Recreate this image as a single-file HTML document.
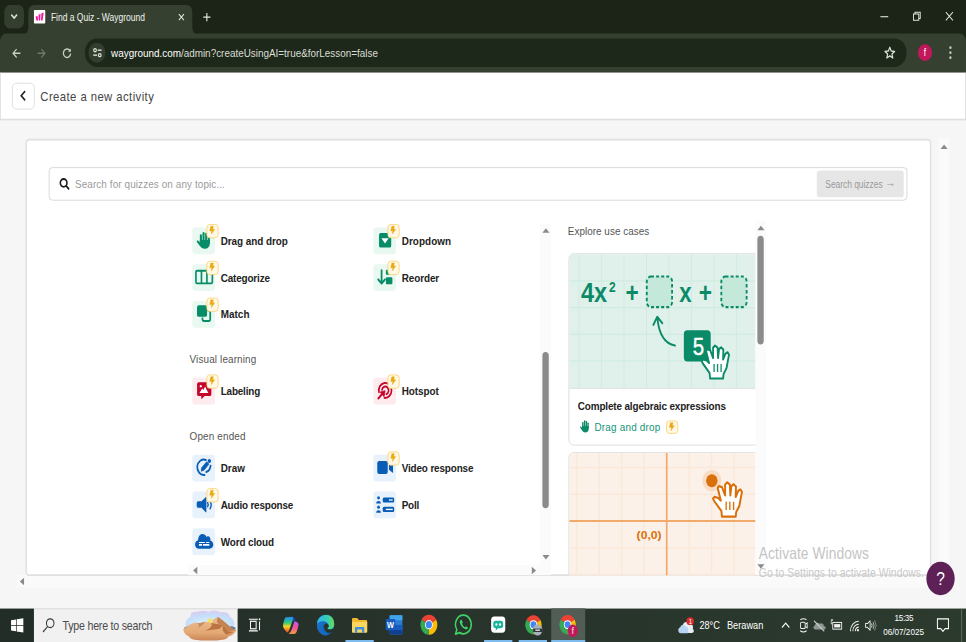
<!DOCTYPE html>
<html lang="en">
<head>
<meta charset="utf-8">
<title>Find a Quiz - Wayground</title>
<style>
*{box-sizing:border-box;margin:0;padding:0}
html,body{width:966px;height:642px;overflow:hidden;background:#f6f6f6}
body{font-family:"Liberation Sans",sans-serif;color:#222}
#stage{position:absolute;left:0;top:0;width:1366px;height:768px;transform:scale(0.70717,0.83594);transform-origin:0 0;overflow:hidden;background:#f6f6f6}
.abs{position:absolute}
.t{position:absolute;white-space:nowrap;line-height:20px}
svg{position:absolute;overflow:visible}
/* chrome */
#tabstrip{left:0;top:0;width:1366px;height:60px;background:#1b2416}
#toolbar{left:0;top:40px;width:1366px;height:47px;background:#354030;border-radius:9px 9px 0 0}
#omni{left:120px;top:46px;width:1162px;height:34px;border-radius:17px;background:#1e281a}
/* page */
#hdr{left:0;top:87px;width:1366px;height:57.1px;background:#fff;border-bottom:2px solid #dfdfdf;border-left:1.5px solid #d8d8d8;border-right:1.5px solid #d8d8d8}
#card{left:36px;top:166px;width:1281px;height:523px;background:#fff;border:2px solid #e0e0e0;border-radius:5px}
.tile{position:absolute;width:32px;height:32px;border-radius:4px}
.g{background:#e9f8f0}.r{background:#fdebed}.b{background:#e7f2fd}
.badge{position:absolute;width:17px;height:16.5px;border-radius:4.5px;background:#fff8e6;border:1.6px solid #fbcf60}
.lbl{font-weight:bold;font-size:14px;color:#222}
.sec{font-size:14px;color:#555}
/* taskbar */
#task{left:0;top:727.7px;width:1366px;height:41px;background:linear-gradient(90deg,#222d27 0%,#27332b 45%,#2c3a2e 100%)}
.tk{color:#fff;font-size:12px}
</style>
</head>
<body>
<div id="stage">

<!-- ===== Browser chrome ===== -->
<div class="abs" id="tabstrip"></div>
<div class="abs" style="left:6px;top:6px;width:28px;height:28px;border-radius:8px;background:#333e2f"></div>
<svg style="left:14px;top:16px" width="12" height="8" viewBox="0 0 12 8"><path d="M2 1.5 L6 5.5 L10 1.5" fill="none" stroke="#e4e8df" stroke-width="2"/></svg>
<div class="abs" id="toolbar"></div>
<!-- active tab -->
<svg style="left:32px;top:6px" width="248" height="35" viewBox="0 0 248 35"><path d="M0 35 Q8 35 8 27 L8 9 Q8 0 17 0 L231 0 Q240 0 240 9 L240 27 Q240 35 248 35 Z" fill="#354030"/></svg>
<div class="abs" style="left:48px;top:12px;width:16px;height:16px;background:#fff;border-radius:1px"></div>
<svg style="left:50px;top:15px" width="12" height="10" viewBox="0 0 12 10"><path d="M0.4 4.6 L3.2 4 L3.8 9.6 L1.4 9.6 Z M4.4 2.6 L7.4 1.8 L6.8 9.6 L4.8 9.6 Z M8.6 0.8 L11.8 0 L10.2 9.6 L8 9.6 Z" fill="#f0149a"/></svg>
<div class="t" id="tabtitle" style="left:72px;top:11px;font-size:12px;color:#f0f3ed">Find a Quiz - Wayground</div>
<svg style="left:251.5px;top:15.5px" width="9" height="9" viewBox="0 0 10 10"><path d="M1 1 L9 9 M9 1 L1 9" stroke="#e6eae2" stroke-width="1.6"/></svg>
<svg style="left:287px;top:14.5px" width="11" height="11" viewBox="0 0 12 12"><path d="M6 0.5 V11.5 M0.5 6 H11.5" stroke="#e6eae2" stroke-width="1.7"/></svg>
<!-- window controls -->
<svg style="left:1245px;top:19px" width="11" height="2" viewBox="0 0 11 2"><path d="M0 1 H11" stroke="#e6eae2" stroke-width="1.3"/></svg>
<svg style="left:1291px;top:14px" width="11" height="11" viewBox="0 0 11 11"><path d="M0.7 2.8 H8.2 V10.3 H0.7 Z M2.8 2.8 V0.7 H10.3 V8.2 H8.2" fill="none" stroke="#e6eae2" stroke-width="1.3"/></svg>
<svg style="left:1337px;top:14px" width="11" height="11" viewBox="0 0 11 11"><path d="M0.5 0.5 L10.5 10.5 M10.5 0.5 L0.5 10.5" stroke="#e6eae2" stroke-width="1.3"/></svg>
<!-- nav buttons -->
<svg style="left:16.5px;top:57.5px" width="13" height="11.5" viewBox="0 0 16 15"><path d="M15 7.5 H2 M8 1 L1.5 7.5 L8 14" fill="none" stroke="#c9cfc4" stroke-width="2.2"/></svg>
<svg style="left:52px;top:57.5px" width="13" height="11.5" viewBox="0 0 16 15"><path d="M1 7.5 H14 M8 1 L14.5 7.5 L8 14" fill="none" stroke="#6f7a69" stroke-width="2.2"/></svg>
<svg style="left:87.5px;top:56.5px" width="13.5" height="13" viewBox="0 0 16 16"><path d="M13.6 5.2 A6.3 6.3 0 1 0 14.3 8.6" fill="none" stroke="#c9cfc4" stroke-width="2.2"/><path d="M14.6 1.2 V6.2 H9.6 Z" fill="#c9cfc4"/></svg>
<div class="abs" id="omni"></div>
<div class="abs" style="left:125px;top:51px;width:24px;height:24px;border-radius:12px;background:#343e2f"></div>
<svg style="left:130.5px;top:57px" width="13.5" height="12" viewBox="0 0 16 14"><circle cx="4" cy="3.5" r="2.2" fill="none" stroke="#dfe4da" stroke-width="1.9"/><path d="M8.5 3.5 H15" stroke="#dfe4da" stroke-width="2"/><circle cx="12" cy="10.5" r="2.2" fill="none" stroke="#dfe4da" stroke-width="1.9"/><path d="M1 10.5 H7.5" stroke="#dfe4da" stroke-width="2"/></svg>
<div class="t" id="url" style="left:157px;top:53px;font-size:14px;color:#d9ded5"><span style="color:#fff">wayground.com</span>/admin?createUsingAI=true&amp;forLesson=false</div>
<svg style="left:1249.5px;top:55px" width="16.5" height="15.5" viewBox="0 0 19 18"><path d="M9.5 1.8 L11.8 7 L17.4 7.5 L13.1 11.2 L14.4 16.7 L9.5 13.8 L4.6 16.7 L5.9 11.2 L1.6 7.5 L7.2 7 Z" fill="none" stroke="#dfe4da" stroke-width="1.9" stroke-linejoin="round"/></svg>
<div class="abs" style="left:1298px;top:53px;width:20px;height:20px;border-radius:10px;background:#c2185b"></div>
<div class="t" style="left:1298px;top:53px;width:20px;text-align:center;font-size:12px;color:#fff">f</div>
<svg style="left:1342px;top:55px" width="4" height="16" viewBox="0 0 4 16"><circle cx="2" cy="2" r="1.6" fill="#c9cfc4"/><circle cx="2" cy="8" r="1.6" fill="#c9cfc4"/><circle cx="2" cy="14" r="1.6" fill="#c9cfc4"/></svg>

<!-- ===== Page ===== -->
<div class="abs" id="hdr"></div>
<div class="abs" style="left:17px;top:99px;width:32px;height:32px;border:1.3px solid #d6d6d6;border-radius:6px;background:#fff"></div>
<svg style="left:28px;top:108px" width="9" height="13" viewBox="0 0 9 13"><path d="M7.5 1 L2 6.5 L7.5 12" fill="none" stroke="#222" stroke-width="2.2"/></svg>
<div class="t" id="title" style="letter-spacing:0.6px;left:57px;top:106px;font-size:16px;color:#454545">Create a new activity</div>

<!-- page scrollbars -->
<div class="abs" style="left:1327px;top:166px;width:15px;height:522px;background:#fafafa"></div>
<svg style="left:1329.5px;top:172.6px" width="10" height="5.3" viewBox="0 0 9 6" preserveAspectRatio="none"><path d="M4.5 0 L9 6 H0 Z" fill="#8a8a8a"/></svg>
<div class="abs" style="left:24px;top:688px;width:1303px;height:15px;background:#fafafa"></div>
<svg style="left:28px;top:691px" width="6" height="9" viewBox="0 0 6 9"><path d="M0 4.5 L6 0 V9 Z" fill="#8a8a8a"/></svg>

<div class="abs" id="card"></div>
<!-- search box -->
<div class="abs" style="left:69px;top:200px;width:1214px;height:40px;border:1.3px solid #cfcfcf;border-radius:5px;background:#fff"></div>
<svg style="left:84px;top:213px" width="14" height="14" viewBox="0 0 14 14"><circle cx="6" cy="5.8" r="4.7" fill="none" stroke="#1a1a1a" stroke-width="2.2"/><path d="M9.6 9.4 L13 12.8" stroke="#1a1a1a" stroke-width="2.3" stroke-linecap="round"/></svg>
<div class="t" id="ph" style="letter-spacing:0.15px;left:106px;top:209.5px;font-size:14px;color:#9b9b9b">Search for quizzes on any topic...</div>
<div class="abs" style="left:1155px;top:204px;width:123px;height:32px;border-radius:4px;background:#e6e6e6"></div>
<div class="t" id="sbtn" style="letter-spacing:-0.07px;left:1167px;top:210px;font-size:12px;color:#9a9a9a">Search quizzes <span style="font-size:15px;position:relative;top:-1.5px;letter-spacing:0">→</span></div>

<!-- left panel scrollbars -->
<div class="abs" style="left:764px;top:267.5px;width:15px;height:408.5px;background:#fbfbfb"></div>
<svg style="left:766.5px;top:272.6px" width="10" height="5.3" viewBox="0 0 9 6" preserveAspectRatio="none"><path d="M4.5 0 L9 6 H0 Z" fill="#8a8a8a"/></svg>
<svg style="left:766.5px;top:663.6px" width="10" height="5.3" viewBox="0 0 9 6" preserveAspectRatio="none"><path d="M4.5 6 L9 0 H0 Z" fill="#8a8a8a"/></svg>
<div class="abs" style="left:767px;top:421px;width:9px;height:187px;border-radius:5px;background:#8b8b8b"></div>
<div class="abs" style="left:266px;top:676px;width:513px;height:12px;background:#fbfbfb"></div>
<svg style="left:273px;top:678px" width="6" height="9" viewBox="0 0 6 9"><path d="M0 4.5 L6 0 V9 Z" fill="#8a8a8a"/></svg>
<svg style="left:752px;top:678px" width="6" height="9" viewBox="0 0 6 9"><path d="M6 4.5 L0 0 V9 Z" fill="#8a8a8a"/></svg>

<!-- question types : row 1 -->
<div class="tile g" style="left:272px;top:272px"></div>
<div class="tile g" style="left:528px;top:272px"></div>
<div class="tile g" style="left:272px;top:316px"></div>
<div class="tile g" style="left:528px;top:316px"></div>
<div class="tile g" style="left:272px;top:360px"></div>
<div class="tile r" style="left:272px;top:452px"></div>
<div class="tile r" style="left:528px;top:452px"></div>
<div class="tile b" style="left:272px;top:544px"></div>
<div class="tile b" style="left:528px;top:544px"></div>
<div class="tile b" style="left:272px;top:588px"></div>
<div class="tile b" style="left:528px;top:588px"></div>
<div class="tile b" style="left:272px;top:632px"></div>
<!--ICONS-START--><svg style="left:272px;top:272px" width="32" height="32" viewBox="0 0 32 32"><g fill="#078c68" transform="translate(-0.62 0) scale(1.1 1)"><rect x="10.2" y="8.3" width="2.7" height="11" rx="1.35"/><rect x="13.6" y="5.4" width="2.7" height="13" rx="1.35"/><rect x="17" y="6.3" width="2.7" height="13" rx="1.35"/><rect x="20.4" y="9.2" width="2.7" height="10" rx="1.35"/><path d="M10.2 15 H23.1 V19 C23.1 23.2 20.2 25.6 16.6 25.6 C13.6 25.6 11.8 24.2 10.3 22.3 L6.4 17.6 C5.4 16.2 7.1 14.9 8.3 16 L10.2 17.9 Z"/></g></svg>
<div class="badge" style="left:292px;top:268px"></div><svg style="left:292px;top:268px" width="17" height="16" viewBox="0 0 17 16"><path d="M6 2.7 L9.7 2.7 L8.8 6.2 L11.6 6.2 L6.8 12.2 L7.5 8.3 L4.5 8.3 Z" fill="#e9a912" stroke="#e9a912" stroke-width="0.5" stroke-linejoin="round"/></svg>
<svg style="left:528px;top:272px" width="32" height="32" viewBox="0 0 32 32"><rect x="8" y="6.8" width="17.2" height="17.4" rx="2.2" fill="#078c68"/><path d="M11.4 12.9 H21.6 L16.5 19.4 Z" fill="#fff"/></svg>
<div class="badge" style="left:548px;top:268px"></div><svg style="left:548px;top:268px" width="17" height="16" viewBox="0 0 17 16"><path d="M6 2.7 L9.7 2.7 L8.8 6.2 L11.6 6.2 L6.8 12.2 L7.5 8.3 L4.5 8.3 Z" fill="#e9a912" stroke="#e9a912" stroke-width="0.5" stroke-linejoin="round"/></svg>
<svg style="left:272px;top:316px" width="32" height="32" viewBox="0 0 32 32"><rect x="5.1" y="7.8" width="23.2" height="15.2" rx="1.6" fill="none" stroke="#078c68" stroke-width="2.3"/><path d="M12.9 8 V23 M20.6 8 V23" stroke="#078c68" stroke-width="2.3"/></svg>
<div class="badge" style="left:292px;top:312px"></div><svg style="left:292px;top:312px" width="17" height="16" viewBox="0 0 17 16"><path d="M6 2.7 L9.7 2.7 L8.8 6.2 L11.6 6.2 L6.8 12.2 L7.5 8.3 L4.5 8.3 Z" fill="#e9a912" stroke="#e9a912" stroke-width="0.5" stroke-linejoin="round"/></svg>
<svg style="left:528px;top:316px" width="32" height="32" viewBox="0 0 32 32"><path d="M11.6 7.2 V22.6 M6.8 18.3 L11.6 23.2 L16.4 18.3" fill="none" stroke="#078c68" stroke-width="2.5" stroke-linecap="round" stroke-linejoin="round"/><rect x="17.7" y="6.7" width="6.6" height="6.1" rx="1.3" fill="#078c68"/><rect x="17.7" y="15.6" width="9.2" height="8.3" rx="1.5" fill="#078c68"/></svg>
<div class="badge" style="left:548px;top:312px"></div><svg style="left:548px;top:312px" width="17" height="16" viewBox="0 0 17 16"><path d="M6 2.7 L9.7 2.7 L8.8 6.2 L11.6 6.2 L6.8 12.2 L7.5 8.3 L4.5 8.3 Z" fill="#e9a912" stroke="#e9a912" stroke-width="0.5" stroke-linejoin="round"/></svg>
<svg style="left:272px;top:360px" width="32" height="32" viewBox="0 0 32 32"><rect x="14.3" y="11.5" width="11" height="12.4" rx="2.2" fill="none" stroke="#078c68" stroke-width="2.4"/><rect x="5.6" y="4.4" width="16" height="15.4" rx="1" fill="#e6f7ef"/><rect x="6.6" y="5.2" width="14.2" height="13.8" rx="2.6" fill="#078c68"/></svg>
<div class="badge" style="left:292px;top:356px"></div><svg style="left:292px;top:356px" width="17" height="16" viewBox="0 0 17 16"><path d="M6 2.7 L9.7 2.7 L8.8 6.2 L11.6 6.2 L6.8 12.2 L7.5 8.3 L4.5 8.3 Z" fill="#e9a912" stroke="#e9a912" stroke-width="0.5" stroke-linejoin="round"/></svg>
<svg style="left:272px;top:452px" width="32" height="32" viewBox="0 0 32 32"><path d="M9 5.2 H24.6 Q26.9 5.2 26.9 7.5 V19.5 Q26.9 21.8 24.6 21.8 H17.4 L12.9 25.6 L12.4 21.8 H9 Q6.7 21.8 6.7 19.5 V7.5 Q6.7 5.2 9 5.2 Z" fill="#c4052c"/><path d="M10 18.2 L14 12.8 L15.6 14.6 L18 10.4 L22.6 18.2 Z" fill="#fff"/><circle cx="11.9" cy="10" r="1.4" fill="#fff"/></svg>
<div class="badge" style="left:292px;top:448px"></div><svg style="left:292px;top:448px" width="17" height="16" viewBox="0 0 17 16"><path d="M6 2.7 L9.7 2.7 L8.8 6.2 L11.6 6.2 L6.8 12.2 L7.5 8.3 L4.5 8.3 Z" fill="#e9a912" stroke="#e9a912" stroke-width="0.5" stroke-linejoin="round"/></svg>
<svg style="left:528px;top:452px" width="32" height="32" viewBox="0 0 32 32"><g fill="none" stroke="#c4052c" stroke-width="2.3" stroke-linecap="round"><path d="M7.9 17.2 A9 9 0 1 1 15.6 24.0"/><path d="M12.2 14.2 A4.7 4.7 0 1 1 18.4 19.5"/><path d="M7 24.6 L13.4 18.2" stroke-width="2.6"/></g><path d="M9.6 16.9 L16.6 15.4 L15.1 22.6 Z" fill="#c4052c" stroke="#c4052c" stroke-width="1" stroke-linejoin="round"/></svg>
<div class="badge" style="left:548px;top:448px"></div><svg style="left:548px;top:448px" width="17" height="16" viewBox="0 0 17 16"><path d="M6 2.7 L9.7 2.7 L8.8 6.2 L11.6 6.2 L6.8 12.2 L7.5 8.3 L4.5 8.3 Z" fill="#e9a912" stroke="#e9a912" stroke-width="0.5" stroke-linejoin="round"/></svg>
<svg style="left:272px;top:544px" width="32" height="32" viewBox="0 0 32 32"><g fill="none" stroke="#0a5db5" stroke-width="2.4" stroke-linecap="round"><path d="M19.2 6.3 A9.2 9.2 0 1 0 17.3 24.1"/><path d="M25.8 13.2 A9.2 9.2 0 0 1 19.6 20.6"/></g><path d="M12.6 19.6 L13.2 15.6 L20.3 8.4 L23.4 11.2 L16.4 18.6 Z" fill="#0a5db5" stroke="#0a5db5" stroke-width="1" stroke-linejoin="round"/><circle cx="24" cy="7.6" r="2.4" fill="#0a5db5"/></svg>
<svg style="left:528px;top:544px" width="32" height="32" viewBox="0 0 32 32"><rect x="5.5" y="7.6" width="14.8" height="15.3" rx="2.6" fill="#0a5db5"/><path d="M22 12.6 L27.8 8.8 V21.8 L22 17.8 Z" fill="#0a5db5"/></svg>
<div class="badge" style="left:548px;top:540px"></div><svg style="left:548px;top:540px" width="17" height="16" viewBox="0 0 17 16"><path d="M6 2.7 L9.7 2.7 L8.8 6.2 L11.6 6.2 L6.8 12.2 L7.5 8.3 L4.5 8.3 Z" fill="#e9a912" stroke="#e9a912" stroke-width="0.5" stroke-linejoin="round"/></svg>
<svg style="left:272px;top:588px" width="32" height="32" viewBox="0 0 32 32"><path d="M8.4 11.9 H13 L19.4 6.9 V24.7 L13 19.2 H8.4 Q6.6 19.2 6.6 17.4 V13.7 Q6.6 11.9 8.4 11.9 Z" fill="#0a5db5" stroke="#0a5db5" stroke-width="0.8" stroke-linejoin="round"/><g fill="none" stroke="#0a5db5" stroke-width="1.9" stroke-linecap="round"><path d="M21.6 13.4 Q23.2 15.6 21.6 18"/><path d="M25 11.6 Q28.3 15.8 25 20.6"/></g></svg>
<div class="badge" style="left:292px;top:584px"></div><svg style="left:292px;top:584px" width="17" height="16" viewBox="0 0 17 16"><path d="M6 2.7 L9.7 2.7 L8.8 6.2 L11.6 6.2 L6.8 12.2 L7.5 8.3 L4.5 8.3 Z" fill="#e9a912" stroke="#e9a912" stroke-width="0.5" stroke-linejoin="round"/></svg>
<svg style="left:528px;top:588px" width="32" height="32" viewBox="0 0 32 32"><g fill="#0a5db5"><circle cx="7.3" cy="7.5" r="2"/><path d="M3.9 14.2 Q3.9 11.3 7.3 11.3 Q10.7 11.3 10.7 14.2 Z"/><circle cx="7.3" cy="18.7" r="2"/><path d="M3.9 25.4 Q3.9 22.5 7.3 22.5 Q10.7 22.5 10.7 25.4 Z"/><rect x="13.2" y="7.1" width="16.2" height="6.1" rx="1.8"/><rect x="13.2" y="18.3" width="16.2" height="6.2" rx="1.8"/></g><rect x="22" y="9.4" width="5.3" height="1.5" fill="#fff"/><rect x="17.6" y="20.6" width="9.7" height="1.6" fill="#fff"/></svg>
<svg style="left:272px;top:632px" width="32" height="32" viewBox="0 0 32 32"><path d="M9.6 24.4 C5.8 24.4 3.8 21.8 3.8 19.3 C3.8 16.6 5.6 14.6 8.2 14.2 C8 10 10.8 6.9 14.4 6.9 C17 6.9 18.8 8.2 19.8 10.2 C20.6 9.6 21.6 9.3 22.6 9.5 C25 10 26 12.2 25.4 14.5 C28 15 29.6 16.9 29.6 19.4 C29.6 22.2 27.4 24.4 24.4 24.4 Z" fill="#0a5db5"/><path d="M9.3 16.9 H17.6 M19.4 16.9 H24 " stroke="#fff" stroke-width="1.2"/><path d="M9.3 19.8 H13.7 M15 19.8 H24" stroke="#fff" stroke-width="2"/></svg>
<!--ICONS-END-->
<div class="t lbl" id="l1" style="letter-spacing:-0.050px;left:312px;top:278px">Drag and drop</div>
<div class="t lbl" id="l2" style="letter-spacing:0.100px;left:568px;top:278px">Dropdown</div>
<div class="t lbl" id="l3" style="letter-spacing:-0.200px;left:312px;top:322px">Categorize</div>
<div class="t lbl" id="l4" style="letter-spacing:-0.100px;left:568px;top:322px">Reorder</div>
<div class="t lbl" id="l5" style="letter-spacing:0.070px;left:312px;top:366px">Match</div>
<div class="t sec" id="s1" style="letter-spacing:0.200px;left:268px;top:419px">Visual learning</div>
<div class="t lbl" id="l6" style="letter-spacing:-0.220px;left:312px;top:458px">Labeling</div>
<div class="t lbl" id="l7" style="letter-spacing:-0.040px;left:568px;top:458px">Hotspot</div>
<div class="t sec" id="s2" style="letter-spacing:0.230px;left:268px;top:511px">Open ended</div>
<div class="t lbl" id="l8" style="letter-spacing:0.090px;left:312px;top:550px">Draw</div>
<div class="t lbl" id="l9" style="letter-spacing:-0.190px;left:568px;top:550px">Video response</div>
<div class="t lbl" id="l10" style="letter-spacing:-0.235px;left:312px;top:594px">Audio response</div>
<div class="t lbl" id="l11" style="letter-spacing:-0.220px;left:568px;top:594px">Poll</div>
<div class="t lbl" id="l12" style="letter-spacing:-0.130px;left:312px;top:638px">Word cloud</div>

<!-- right panel -->
<div class="t sec" id="s3" style="letter-spacing:0.035px;left:803px;top:266px">Explore use cases</div>
<div class="abs" style="left:1068px;top:264px;width:15px;height:424px;background:#fbfbfb"></div>
<svg style="left:1070.5px;top:269.6px" width="10" height="5.3" viewBox="0 0 9 6" preserveAspectRatio="none"><path d="M4.5 0 L9 6 H0 Z" fill="#8a8a8a"/></svg>
<svg style="left:1070.5px;top:674.6px" width="10" height="5.3" viewBox="0 0 9 6" preserveAspectRatio="none"><path d="M4.5 6 L9 0 H0 Z" fill="#8a8a8a"/></svg>
<div class="abs" style="left:1071px;top:282px;width:9px;height:130px;border-radius:5px;background:#8b8b8b"></div>
<div class="abs" id="rp" style="left:796px;top:296.7px;width:272px;height:391.3px;overflow:hidden">
<!--UC-START--><div class="abs" style="left:8px;top:6px;width:300px;height:230px;border:1px solid #d4d4d4;border-radius:7px;background:#fff;overflow:hidden">
<svg style="left:0;top:0" width="300" height="160" viewBox="0 0 300 160">
<rect width="300" height="160" fill="#dff1ea"/><path d="M13.8 0 V161" stroke="#d0ece1" stroke-width="1.4"/><path d="M45.6 0 V161" stroke="#d0ece1" stroke-width="1.4"/><path d="M77.4 0 V161" stroke="#d0ece1" stroke-width="1.4"/><path d="M109.2 0 V161" stroke="#d0ece1" stroke-width="1.4"/><path d="M141.0 0 V161" stroke="#d0ece1" stroke-width="1.4"/><path d="M172.8 0 V161" stroke="#d0ece1" stroke-width="1.4"/><path d="M204.6 0 V161" stroke="#d0ece1" stroke-width="1.4"/><path d="M236.4 0 V161" stroke="#d0ece1" stroke-width="1.4"/><path d="M268.2 0 V161" stroke="#d0ece1" stroke-width="1.4"/><path d="M300.0 0 V161" stroke="#d0ece1" stroke-width="1.4"/><path d="M0 32 H300" stroke="#d0ece1" stroke-width="1.4"/><path d="M0 64 H300" stroke="#d0ece1" stroke-width="1.4"/><path d="M0 96 H300" stroke="#d0ece1" stroke-width="1.4"/><path d="M0 128 H300" stroke="#d0ece1" stroke-width="1.4"/>
<g font-family="Liberation Sans, sans-serif" font-weight="bold" fill="#0b8a68">
<text x="16.5" y="57" font-size="32" textLength="37" lengthAdjust="spacingAndGlyphs">4x</text>
<text x="56.3" y="45.4" font-size="17">2</text>
<text x="79.5" y="57" font-size="32">+</text>
<text x="155.5" y="57" font-size="32" textLength="17.5" lengthAdjust="spacingAndGlyphs">x</text>
<text x="183" y="57" font-size="32">+</text>
</g>
<rect x="109.6" y="26.8" width="35.8" height="36.6" rx="6" fill="#c4e8da" stroke="#0b8a68" stroke-width="2.6" stroke-dasharray="4.2 3"/>
<rect x="215" y="26.8" width="35.8" height="36.6" rx="6" fill="#c4e8da" stroke="#0b8a68" stroke-width="2.6" stroke-dasharray="4.2 3"/>
<path d="M149.5 109.3 Q128 106 124.6 76.5 M119 84.5 L124.4 75 L131.6 82.6" fill="none" stroke="#0b8a68" stroke-width="2.6" stroke-linecap="round" stroke-linejoin="round"/>
<rect x="162" y="91" width="38" height="37.5" rx="5" fill="#0b8a68"/>
<text x="174.6" y="120.7" font-family="Liberation Sans, sans-serif" font-size="29" fill="#fff" stroke="#fff" stroke-width="0.5">5</text>
<polygon points="199.2,148.8 198.4,142.2 188.9,130.9 187.2,127.9 189.3,126.1 194.2,127.3 197.7,130.3 193.5,116.0 194.9,113.6 199.2,114.8 203.4,124.3 203.4,111.8 206.2,109.4 209.7,111.8 210.4,124.3 211.8,113.6 214.7,111.5 217.9,114.2 217.5,126.1 221.0,119.0 223.8,117.4 225.9,120.2 222.4,136.3 218.2,143.4 217.5,148.8" fill="#fff" stroke="#0b8a68" stroke-width="2.6" stroke-linejoin="round"/><path d="M204.8 131.5 V141 M209.7 131.5 V141 M214.7 131.5 V141" stroke="#0b8a68" stroke-width="1.8" fill="none"/>
</svg>
<div class="abs" style="left:0;top:160px;width:300px;height:1px;background:#d9d9d9"></div>
<div class="t lbl" id="u1" style="letter-spacing:-0.18px;left:12px;top:172.8px">Complete algebraic expressions</div>
<svg style="left:14px;top:198.5px" width="16" height="16" viewBox="5 4.5 21 22"><g fill="#0b8a68"><rect x="10.2" y="8.3" width="2.7" height="11" rx="1.35"/><rect x="13.6" y="5.4" width="2.7" height="13" rx="1.35"/><rect x="17" y="6.3" width="2.7" height="13" rx="1.35"/><rect x="20.4" y="9.2" width="2.7" height="10" rx="1.35"/><path d="M10.2 15 H23.1 V19 C23.1 23.2 20.2 25.6 16.6 25.6 C13.6 25.6 11.8 24.2 10.3 22.3 L6.4 17.6 C5.4 16.2 7.1 14.9 8.3 16 L10.2 17.9 Z"/></g></svg>
<div class="t" id="u2" style="letter-spacing:0.31px;left:35.5px;top:197px;font-size:14px;color:#14967a">Drag and drop</div>
<div class="badge" style="left:137px;top:199px;width:17px;height:16px"></div>
<svg style="left:137px;top:199px" width="17" height="16" viewBox="0 0 17 16"><path d="M6 2.7 L9.7 2.7 L8.8 6.2 L11.6 6.2 L6.8 12.2 L7.5 8.3 L4.5 8.3 Z" fill="#e9a912" stroke="#e9a912" stroke-width="0.5" stroke-linejoin="round"/></svg>
</div>
<div class="abs" style="left:8px;top:244.2px;width:300px;height:231px;border:1px solid #d4d4d4;border-radius:7px;background:#fff;overflow:hidden">
<svg style="left:0;top:0" width="300" height="160" viewBox="0 0 300 160">
<rect width="300" height="160" fill="#fcf1e8"/><path d="M10.5 0 V161" stroke="#fae8d9" stroke-width="1.9"/><path d="M42.3 0 V161" stroke="#fae8d9" stroke-width="1.9"/><path d="M74.1 0 V161" stroke="#fae8d9" stroke-width="1.9"/><path d="M105.9 0 V161" stroke="#fae8d9" stroke-width="1.9"/><path d="M137.7 0 V161" stroke="#fae8d9" stroke-width="1.9"/><path d="M169.5 0 V161" stroke="#fae8d9" stroke-width="1.9"/><path d="M201.3 0 V161" stroke="#fae8d9" stroke-width="1.9"/><path d="M233.1 0 V161" stroke="#fae8d9" stroke-width="1.9"/><path d="M264.9 0 V161" stroke="#fae8d9" stroke-width="1.9"/><path d="M296.7 0 V161" stroke="#fae8d9" stroke-width="1.9"/><path d="M0 17.2 H300" stroke="#fae8d9" stroke-width="1.9"/><path d="M0 49.2 H300" stroke="#fae8d9" stroke-width="1.9"/><path d="M0 81.2 H300" stroke="#fae8d9" stroke-width="1.9"/><path d="M0 113.2 H300" stroke="#fae8d9" stroke-width="1.9"/><path d="M0 145.2 H300" stroke="#fae8d9" stroke-width="1.9"/>
<path d="M137.8 0 V160 M0 81.2 H300" stroke="#f1aa6c" stroke-width="2.4"/>
<text x="95.2" y="102.4" font-family="Liberation Sans, sans-serif" font-weight="bold" font-size="13.5" fill="#d9700c" textLength="35.3" lengthAdjust="spacingAndGlyphs">(0,0)</text>
<ellipse cx="201.6" cy="33.1" rx="13.5" ry="12.8" fill="#fadcc4"/>
<ellipse cx="201.6" cy="33.1" rx="8.1" ry="7.7" fill="#d9700c"/>
<g transform="translate(4.77 -78.68) scale(1.06 1.04)"><polygon points="199.2,148.8 198.4,142.2 188.9,130.9 187.2,127.9 189.3,126.1 194.2,127.3 197.7,130.3 193.5,116.0 194.9,113.6 199.2,114.8 203.4,124.3 203.4,111.8 206.2,109.4 209.7,111.8 210.4,124.3 211.8,113.6 214.7,111.5 217.9,114.2 217.5,126.1 221.0,119.0 223.8,117.4 225.9,120.2 222.4,136.3 218.2,143.4 217.5,148.8" fill="#fff" stroke="#d9700c" stroke-width="2.6" stroke-linejoin="round"/><path d="M204.8 131.5 V141 M209.7 131.5 V141 M214.7 131.5 V141" stroke="#d9700c" stroke-width="1.8" fill="none"/></g>
</svg>
</div>
<!--UC-END-->
</div>


<!--WATERMARK-->

<!-- ===== Taskbar ===== -->
<div class="abs" id="task"></div>
<!--TB-START--><div class="t" id="w1" style="left:1073px;top:650.4px;font-size:19.5px;line-height:24px;color:#c4c4c4;letter-spacing:0.13px">Activate Windows</div>
<div class="t" id="w2" style="letter-spacing:0.09px;left:1073px;top:675.4px;font-size:14.6px;line-height:20px;color:#c8c8c8">Go to Settings to activate Windows.</div>
<div class="abs" style="left:1310px;top:672px;width:40px;height:40px;border-radius:20px;background:#5d2057"></div>
<div class="t" style="left:1310px;top:679.5px;width:40px;text-align:center;font-size:22px;line-height:26px;color:#fff">?</div>
<svg style="left:0;top:0" width="1366" height="768" viewBox="0 0 1366 768"><path d="M15.6 742 L22.6 741 V747.6 H15.6 Z M23.6 740.8 L33 739.6 V747.6 H23.6 Z M15.6 748.6 H22.6 V755.2 L15.6 754.2 Z M23.6 748.6 H33 V756.6 L23.6 755.4 Z" fill="#fff"/><rect x="48" y="727.6" width="288" height="40.4" fill="#f1f1f1"/><rect x="48" y="727.6" width="288" height="1.6" fill="#e2e2e2"/><circle cx="71" cy="745.5" r="5.3" fill="none" stroke="#3a3a3a" stroke-width="1.5"/><path d="M67.2 749.6 L60.8 756" stroke="#3a3a3a" stroke-width="1.6"/><defs><radialGradient id="sky" cx="0.5" cy="0.75" r="0.7"><stop offset="0" stop-color="#fdf3c8"/><stop offset="0.25" stop-color="#d6ecfb"/><stop offset="0.7" stop-color="#c3defa"/><stop offset="1" stop-color="#d9cdf0"/></radialGradient><linearGradient id="dn" x1="0" y1="0" x2="0" y2="1"><stop offset="0" stop-color="#e9b98a"/><stop offset="0.6" stop-color="#e3a873"/><stop offset="1" stop-color="#c98458"/></linearGradient></defs><path d="M263.23 750.28 Q259.72 742.35 269.67 737.40 Q268.50 731.26 279.04 731.95 Q287.24 729.08 295.44 731.95 Q303.63 728.29 311.83 732.45 Q322.37 730.66 324.95 737.40 Q333.50 742.35 330.80 751.77 Z" fill="url(#sky)"/><ellipse cx="297.78" cy="742.85" rx="4.4" ry="3" fill="#f8dd55" opacity="0.85"/><path d="M260.30 750.77 L270.84 747.80 L270.84 751.27 L260.89 752.26 Z M326.47 748.79 L332.91 750.77 L332.91 752.76 L325.88 752.26 Z" fill="#4a78b4"/><path d="M301.29 742.35 L308.32 737.90 L315.34 742.35 L324.71 749.29 L333.50 753.25 Q334.08 755.73 329.40 756.72 L301.29 752.26 Z" fill="#c48452"/><path d="M301.29 742.35 L308.32 737.90 L306.56 743.84 L310.66 748.30 L298.95 745.82 Z" fill="#e6b48a"/><path d="M259.13 752.76 Q269.67 745.33 276.70 744.53 Q281.38 746.81 289.58 743.54 Q295.44 744.53 298.95 745.13 L315.34 747.80 L322.37 755.23 Q329.40 754.44 333.50 754.04 Q332.33 759.39 322.61 761.67 Q321.20 766.33 295.44 766.33 Q268.50 766.33 267.92 761.67 Q259.13 758.40 259.13 752.76 Z" fill="url(#dn)"/><path d="M298.95 745.13 Q301.88 750.48 290.17 754.44 L310.66 752.26 L315.34 747.80 Z" fill="#b9743f"/><path d="M315.34 747.80 Q312.77 755.23 320.61 759.39 L330.57 756.03 L322.37 755.23 Z" fill="#b9743f"/><path d="M276.70 744.53 Q281.38 746.81 289.58 743.54 Q287.24 748.50 279.04 751.27 Q284.90 747.31 276.70 744.53 Z" fill="#c98a5c"/><g fill="none" stroke="#fff" stroke-width="1.4"><rect x="354.2" y="743.2" width="8" height="9"/><path d="M352 740.8 H364.6 M352 754.6 H364.6 M367 743.4 V754"/></g><rect x="366" y="739.8" width="2" height="2.2" fill="#fff"/><defs><linearGradient id="cpa" x1="0" y1="0" x2="0" y2="1"><stop offset="0" stop-color="#1f8df2"/><stop offset="0.38" stop-color="#35c97a"/><stop offset="0.62" stop-color="#f3d325"/><stop offset="1" stop-color="#f0482c"/></linearGradient><linearGradient id="cpb" x1="0" y1="0" x2="0" y2="1"><stop offset="0" stop-color="#b65af2"/><stop offset="0.5" stop-color="#f0529c"/><stop offset="1" stop-color="#f7a13a"/></linearGradient></defs><path d="M411.08 737.81 L416.94 739.00 L417.17 743.76 L414.01 742.27 Z" fill="#1a3fd0"/><path d="M404.05 738.31 L413.19 737.81 Q415.53 738.31 414.36 740.78 L408.97 753.66 Q407.57 757.43 405.58 756.24 L401.24 751.88 Q399.37 749.70 400.54 746.23 L402.30 740.78 Q402.88 738.60 404.05 738.31 Z" fill="url(#cpa)"/><path d="M416.94 743.26 L421.03 744.75 Q422.79 746.23 421.74 749.70 L419.51 755.64 Q418.11 758.62 415.18 758.42 L407.80 758.22 Q411.31 756.83 412.60 752.87 L415.77 744.35 Q416.35 743.06 416.94 743.26 Z" fill="url(#cpb)"/><defs><linearGradient id="ed1" x1="0" y1="0" x2="1" y2="1"><stop offset="0" stop-color="#1d7fd6"/><stop offset="1" stop-color="#0c4f9e"/></linearGradient><linearGradient id="ed2" x1="0" y1="0" x2="1" y2="0"><stop offset="0" stop-color="#2cb4ea"/><stop offset="0.55" stop-color="#35c9c0"/><stop offset="1" stop-color="#66dd55"/></linearGradient></defs><ellipse cx="460.3" cy="747.7" rx="12.3" ry="12.4" fill="url(#ed1)"/><path d="M448.09 746.23 Q449.73 735.83 461.44 735.43 Q471.98 736.03 472.68 746.23 Q472.91 751.19 467.88 752.87 Q463.78 753.66 462.61 751.48 Q465.54 749.70 463.78 746.23 Q461.44 742.76 456.75 743.26 Q451.48 743.76 448.09 746.23 Z" fill="url(#ed2)"/><path d="M457.92 749.70 Q457.92 746.23 462.02 745.94 Q465.18 746.93 465.18 749.50 Q463.78 750.89 462.61 751.68 Q464.37 753.86 468.46 752.87 Q471.74 751.68 472.21 753.66 Q469.05 757.63 463.78 756.83 Q458.51 754.65 457.92 749.70 Z" fill="#27332b"/><path d="M448.09 746.23 Q451.48 743.26 456.75 743.26 Q453.47 746.23 455.00 751.19 Q457.34 757.63 466.12 758.12 Q462.61 760.40 457.92 759.80 Q448.56 757.13 448.09 746.23 Z" fill="#1b6fc8" opacity="0.7"/><g transform="translate(508.5 748.2) scale(0.91 0.86) translate(-508.75 -748.25)"><path d="M497 739.5 Q497 738 498.5 738 H505 L507.5 740.5 H519 Q520.5 740.5 520.5 742 V757 H497 Z" fill="#f2b92e"/>
<path d="M497 743.5 H520.5 V757.5 Q520.5 758.5 519.5 758.5 H498 Q497 758.5 497 757.5 Z" fill="#fad65e"/>
<path d="M501.5 758.5 V751.5 Q501.5 750.5 502.5 750.5 H515 Q516 750.5 516 751.5 V758.5 H512.5 V754 H505 V758.5 Z" fill="#3f8fe0"/></g><rect x="551" y="736" width="18" height="23" rx="1.5" fill="#2b7cd3"/><rect x="551" y="736" width="18" height="6" fill="#41a5ee"/><rect x="551" y="747.5" width="18" height="6" fill="#185abd"/><rect x="551" y="753.5" width="18" height="5.5" rx="1" fill="#103f91"/>
<rect x="545.5" y="740.5" width="13.5" height="13.5" rx="1.3" fill="#185abd"/>
<text x="547.2" y="751.5" font-family="Liberation Sans, sans-serif" font-weight="bold" font-size="10.5" fill="#fff">W</text><path d="M606.5 747.3 L596.11 741.30 A12 12 0 0 1 616.89 741.30 Z" fill="#ea4335"/><path d="M606.5 747.3 L616.89 741.30 A12 12 0 0 1 606.50 759.30 Z" fill="#fbbc05"/><path d="M606.5 747.3 L606.50 759.30 A12 12 0 0 1 596.11 741.30 Z" fill="#34a853"/><circle cx="606.5" cy="747.3" r="5.52" fill="#fff"/><circle cx="606.5" cy="747.3" r="4.32" fill="#4285f4"/><path d="M655.5 735.8 A11.2 11.2 0 1 1 649.8 756.8 L644.2 758.6 L646 753.2 A11.2 11.2 0 0 1 655.5 735.8 Z" fill="none" stroke="#3fd366" stroke-width="2.1" stroke-linejoin="round"/>
<path d="M651.2 741.6 C650 742.6 649.8 744.6 651 746.8 C652.6 749.8 655.2 752 658.2 752.8 C660 753.2 661.4 752.4 661.8 751 L659 749.2 L657.6 750.4 C656 749.8 654.2 748 653.4 746.2 L654.4 744.8 L652.8 741.4 Z" fill="#3fd366"/><rect x="694.5" y="737.5" width="20" height="19.5" rx="4.5" fill="#fff"/><rect x="697.5" y="742.5" width="14" height="9" rx="3.6" fill="#18b59b"/><circle cx="701.9" cy="747" r="1.5" fill="#fff"/><circle cx="707.1" cy="747" r="1.5" fill="#fff"/><path d="M701.5 751 L700.8 754.4 L704.5 751.4 Z" fill="#18b59b"/><path d="M754.3 747.4 L744.34 741.65 A11.5 11.5 0 0 1 764.26 741.65 Z" fill="#ea4335"/><path d="M754.3 747.4 L764.26 741.65 A11.5 11.5 0 0 1 754.30 758.90 Z" fill="#fbbc05"/><path d="M754.3 747.4 L754.30 758.90 A11.5 11.5 0 0 1 744.34 741.65 Z" fill="#34a853"/><circle cx="754.3" cy="747.4" r="5.29" fill="#fff"/><circle cx="754.3" cy="747.4" r="4.14" fill="#4285f4"/><ellipse cx="760.3" cy="753.5" rx="6.6" ry="6.8" fill="#aab0b8"/><path d="M753.9 752 H766.7 V756 H753.9 Z" fill="#2e3338"/><rect x="757" y="753" width="6.5" height="1.8" fill="#cfd4da"/><rect x="779.5" y="727.7" width="48" height="40.3" fill="#515d55"/><path d="M802.6 747.2 L792.64 741.45 A11.5 11.5 0 0 1 812.56 741.45 Z" fill="#ea4335"/><path d="M802.6 747.2 L812.56 741.45 A11.5 11.5 0 0 1 802.60 758.70 Z" fill="#fbbc05"/><path d="M802.6 747.2 L802.60 758.70 A11.5 11.5 0 0 1 792.64 741.45 Z" fill="#34a853"/><circle cx="802.6" cy="747.2" r="5.29" fill="#fff"/><circle cx="802.6" cy="747.2" r="4.14" fill="#4285f4"/><ellipse cx="810" cy="754.6" rx="7.2" ry="7.4" fill="#c2185b"/><text x="808.4" y="758.6" font-family="Liberation Sans, sans-serif" font-size="10.5" fill="#fff">f</text><rect x="488.5" y="765.6" width="40" height="2.4" fill="#7ebcf0"/><rect x="684.5" y="765.6" width="40" height="2.4" fill="#7ebcf0"/><rect x="733.5" y="765.6" width="40" height="2.4" fill="#7ebcf0"/><rect x="779.5" y="765.6" width="48" height="2.4" fill="#7ebcf0"/><g transform="translate(969.8 750.5) scale(0.82 0.95) translate(-966 -750)"><path d="M962 757 C956 757 955 750 960.5 748.6 C961 743 969 741.5 971.5 746 C976 744.5 980 748 978 752 C981 753.5 980 757 976.5 757 Z" fill="#e8eef6"/>
<path d="M957.5 757.5 C952 757.5 951.5 751 956.5 750 C957.5 746 963 745.5 965 749 C969 748.5 971 752 969.5 754.5 C971.5 755.5 971 757.5 968.5 757.5 Z" fill="#b9d3f2"/></g>
<ellipse cx="975.9" cy="743.1" rx="5.3" ry="4.7" fill="#d92c2c"/><text x="974" y="746.3" font-family="Liberation Sans, sans-serif" font-size="8.5" fill="#fff">1</text><path d="M1105.8 750.6 L1111 745.4 L1116.2 750.6" fill="none" stroke="#fff" stroke-width="1.5"/><g fill="none" stroke="#f2f2f2" stroke-width="1.25"><rect x="1132" y="744.3" width="6.6" height="7.6" rx="1.6"/><path d="M1138.6 746.6 L1141.4 745.2 V751 L1138.6 749.6"/><path d="M1131.6 741.6 Q1136 738.6 1140.6 741.6 M1131.6 754.6 Q1136 757.6 1140.6 754.6"/></g><path d="M1153 753 C1149.5 753 1149.5 748.8 1152.5 748.3 C1153 745 1157 744 1159 746.3 C1161.4 744.5 1165 746 1165 748.8 C1168.2 748.8 1168.5 753 1165.4 753 Z" fill="#8f9892"/><path d="M1151 742.6 L1165.6 755.2" stroke="#c9cfca" stroke-width="1.4"/><rect x="1177.6" y="744.6" width="12.6" height="8" fill="none" stroke="#f2f2f2" stroke-width="1.2"/><rect x="1179.6" y="746.6" width="8.6" height="4" fill="#f2f2f2"/><path d="M1175.4 743 v3.4 h2.2 M1175 742.4 h2.6 M1175.6 742 v-1.4 M1177.4 742 v-1.4" stroke="#f2f2f2" stroke-width="1" fill="none"/><g fill="none" stroke="#f2f2f2" stroke-width="1.3"><path d="M1202.6 755 A11.6 11.6 0 0 1 1214.4 743.2"/><path d="M1206 755 A8.2 8.2 0 0 1 1214.4 746.8"/><path d="M1209.4 755 A4.8 4.8 0 0 1 1214.4 750.2"/></g><circle cx="1213.2" cy="753.8" r="1.4" fill="#f2f2f2"/><path d="M1224 746 H1226.6 L1230.4 742.6 V753.8 L1226.6 750.4 H1224 Z" fill="none" stroke="#f2f2f2" stroke-width="1.2" stroke-linejoin="round"/><g fill="none" stroke="#f2f2f2" stroke-width="1.1"><path d="M1232.4 745.8 Q1234 748.2 1232.4 750.6"/><path d="M1234.6 744 Q1237.4 748.2 1234.6 752.4" opacity="0.8"/><path d="M1236.8 742 Q1241 748.2 1236.8 754.4" opacity="0.5"/></g><path d="M1325.6 740.4 H1341.2 V752 H1336.4 L1333.4 755.2 L1330.4 752 H1325.6 Z" fill="none" stroke="#fff" stroke-width="1.4"/><path d="M1359.8 728 V768" stroke="#6f7a73" stroke-width="1"/></svg>
<div class="t" id="k1" style="letter-spacing:-0.3px;left:88.5px;top:739px;font-size:15px;color:#4a4a4a">Type here to search</div>
<div class="t tk" id="k2" style="left:989px;top:738px;font-size:13px">28°C</div>
<div class="t tk" id="k3" style="left:1028px;top:738px;font-size:13px">Berawan</div>
<div class="t tk" id="k4" style="left:1265px;top:728.5px;font-size:11.5px;letter-spacing:-0.49px">15:35</div>
<div class="t tk" id="k5" style="left:1249px;top:746.3px;font-size:11.5px">06/07/2025</div>
<!--TB-END-->

</div>
</body>
</html>
